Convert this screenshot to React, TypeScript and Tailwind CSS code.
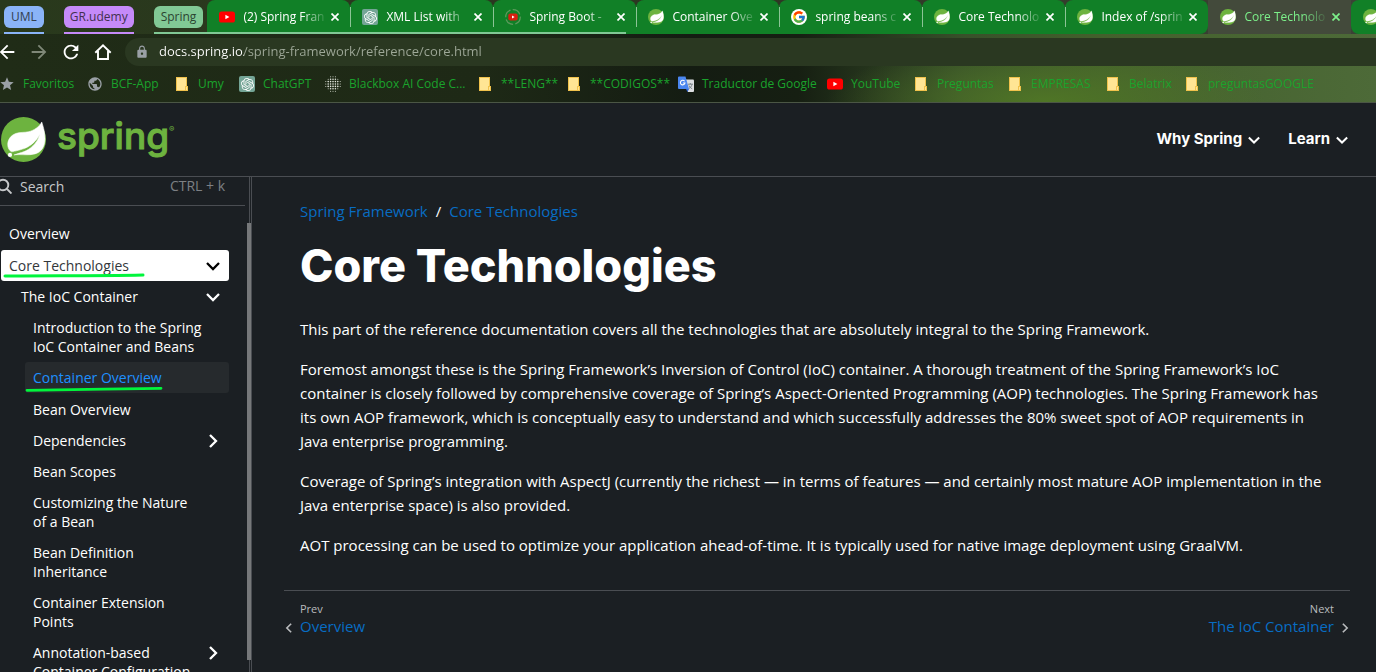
import React from 'react';
import { MdArrowBack, MdArrowForward, MdRefresh, MdLock, MdStar, MdPublic } from 'react-icons/md';
import { SiOpenai } from 'react-icons/si';
import { FcGoogle } from 'react-icons/fc';

const LEAF =
  'M21.7796 17.2939c-2.9385 3.9263-9.2601 2.5928-13.2852 2.7904 0 0-.7161.0494-1.4323.1481 0 0 .2717-.1234.6174-.2469 2.8398-.9877 4.1732-1.1853 5.9018-2.0743 3.2349-1.6545 6.4698-5.2844 7.1118-9.0379-1.2347 3.6053-4.9881 6.7167-8.3959 7.9761-2.3459.8643-6.5685 1.7039-6.5685 1.7039l-.1729-.0988c-2.8645-1.4076-2.9632-7.6304 2.2718-9.6306 2.2966-.889 4.4696-.395 6.9637-.9877 2.6422-.6174 5.7043-2.5929 6.939-5.1857 1.3828 4.1732 3.062 10.643.0493 14.6434z';

function SpringLeaf({ className }: { className: string }) {
  return (
    <svg viewBox="0 0 24 24" className={className} aria-hidden="true">
      <circle cx="12" cy="12" r="12" fill="#6db33f" />
      <path d={LEAF} fill="#fff" stroke="#fff" strokeWidth=".3" />
      <circle cx="4.8" cy="20.2" r="1.1" fill="#fff" />
    </svg>
  );
}

function YouTubeIcon() {
  return (
    <svg viewBox="0 0 16 16" className="size-4" aria-hidden="true">
      <rect x="0" y="2.5" width="16" height="11" rx="2.6" fill="#f00" />
      <path d="M6.4 5.7v4.6L10.4 8z" fill="#fff" />
    </svg>
  );
}

function ChatGptIcon() {
  return (
    <span className="flex size-4 items-center justify-center rounded-[2px] bg-[#74a596] text-white">
      <SiOpenai className="size-[13px]" />
    </span>
  );
}

function RecordingIcon() {
  return (
    <svg viewBox="0 0 16 16" className="size-4" aria-hidden="true">
      <circle cx="8" cy="8" r="7.3" fill="none" stroke="#5d9a5c" strokeWidth="1.2" strokeDasharray="9 2.3" />
      <rect x="3.3" y="4.5" width="9.4" height="7" rx="2" fill="#d91f11" />
      <path d="M7 6.5v3L9.6 8z" fill="#fff" />
    </svg>
  );
}

function GoogleIcon() {
  return (
    <span className="flex size-4 items-center justify-center rounded-full bg-white">
      <FcGoogle className="size-[14px]" />
    </span>
  );
}

function NoteIcon() {
  return (
    <svg viewBox="0 0 16 16" className="size-4" aria-hidden="true">
      <path d="M2 1h11v9h1v5H2z" fill="#f0c24c" />
      <path d="M3 2h9v8h-1v4H3z" fill="#ffe594" />
      <path d="M12 11h1v3h-1z" fill="#ffe594" />
    </svg>
  );
}

function DotsIcon() {
  const dots: React.ReactNode[] = [];
  for (let r = 0; r < 7; r++) {
    for (let c = 0; c < 7; c++) {
      const d = Math.hypot(r - 3, c - 3);
      if (d < 3.4) {
        dots.push(
          <circle key={`${r}-${c}`} cx={0.8 + c * 2.4} cy={0.8 + r * 2.4} r={d < 2.3 ? 0.8 : 0.5} fill="#e4e8df" />,
        );
      }
    }
  }
  return (
    <svg viewBox="0 0 16 16" className="size-4" aria-hidden="true">
      {dots}
    </svg>
  );
}

function TranslateIcon() {
  return (
    <svg viewBox="0 0 16 16" className="size-4" aria-hidden="true">
      <path d="M6 3.500h9a1 1 0 0 1 1 1V15a1 1 0 0 1-1 1H10z" fill="#dcdfe1" />
      <path d="M10 8.200h5M12.300 7v1.200M14 8.300c-.4 2-1.500 3.300-3.200 4.300M11 9.500c.7 1.600 1.800 2.600 3.200 3.300" stroke="#6f7b80" strokeWidth=".9" fill="none" />
      <path d="M8 13h3l-1.500 3z" fill="#3367d6" />
      <path d="M1 .5h6.500L11 13H1a1 1 0 0 1-1-1V1.500a1 1 0 0 1 1-1z" fill="#4a86f0" />
      <path d="M6.600 5.200A2.300 2.300 0 1 0 7 7H4.900" fill="none" stroke="#fff" strokeWidth="1.100" />
    </svg>
  );
}

function HomeIcon() {
  return (
    <svg viewBox="0 0 18 18" className="size-[18px]" fill="none" stroke="#fff" strokeWidth="1.900" aria-hidden="true">
      <path d="M1.300 9.800 9 2.300l7.700 7.500M4 8v8h10V8" />
    </svg>
  );
}

function CloseIcon() {
  return (
    <svg viewBox="0 0 8 8" className="size-2" stroke="currentColor" strokeWidth="1.700" aria-hidden="true">
      <path d="M.5.5l7 7M7.500.5l-7 7" />
    </svg>
  );
}

function Chevron({ className }: { className: string }) {
  return (
    <svg viewBox="0 0 14 14" className={className} fill="none" stroke="currentColor" strokeWidth="2.300" aria-hidden="true">
      <path d="M1 4l6 6 6-6" />
    </svg>
  );
}

type TabData = { title: string; icon: React.ReactNode; divider?: boolean; active?: boolean; shape: string };

function Tab({ title, icon, divider, active, shape }: TabData) {
  const colour = active ? 'bg-[#434a3b] text-[#7cf08a]' : 'bg-[#118027] text-white';
  return (
    <div className={`relative flex h-[34px] w-[143px] shrink-0 items-center pl-3 pr-[11px] ${colour} ${shape}`}>
      {divider && <span className="absolute left-0 top-[7px] h-5 w-px bg-[#8cc496]" />}
      <button type="button" className="flex min-w-0 flex-1 items-center gap-2">
        <span className="shrink-0">{icon}</span>
        <span className="flex-1 whitespace-nowrap text-left text-xs [mask-image:linear-gradient(90deg,#000_72%,rgba(0,0,0,0.15))]">
          {title}
        </span>
      </button>
      <button type="button" aria-label={`Close ${title}`} className="ml-2">
        <CloseIcon />
      </button>
    </div>
  );
}

const leafIcon = <SpringLeaf className="size-4" />;

const groupedTabs: TabData[] = [
  { title: '(2) Spring Fran', icon: <YouTubeIcon />, shape: 'rounded-tl-lg rounded-tr-lg' },
  { title: 'XML List with', icon: <ChatGptIcon />, divider: true, shape: 'rounded-t-lg' },
  { title: 'Spring Boot -', icon: <RecordingIcon />, divider: true, shape: 'rounded-t-lg' },
];

const looseTabs: TabData[] = [
  { title: 'Container Ove', icon: leafIcon, divider: true, shape: 'rounded-t-lg' },
  { title: 'spring beans c', icon: <GoogleIcon />, divider: true, shape: 'rounded-t-lg' },
  { title: 'Core Technolo', icon: leafIcon, divider: true, shape: 'rounded-t-lg' },
  { title: 'Index of /sprin', icon: leafIcon, divider: true, shape: 'rounded-t-lg rounded-br-lg' },
  { title: 'Core Technolo', icon: leafIcon, active: true, shape: '' },
];

const bookmarks = [
  { label: 'Favoritos', width: 'w-[88px]', icon: <MdStar className="size-4 text-[#9aa0a6]" /> },
  { label: 'BCF-App', width: 'w-[87px]', icon: <MdPublic className="size-4 text-[#9aa0a6]" /> },
  { label: 'Umy', width: 'w-[65px]', icon: <NoteIcon /> },
  { label: 'ChatGPT', width: 'w-[86px]', icon: <ChatGptIcon /> },
  { label: 'Blackbox AI Code C...', width: 'w-[152px]', icon: <DotsIcon /> },
  { label: '**LENG**', width: 'w-[89px]', icon: <NoteIcon /> },
  { label: '**CODIGOS**', width: 'w-[112px]', icon: <NoteIcon /> },
  { label: 'Traductor de Google', width: 'w-[149px]', icon: <TranslateIcon /> },
  { label: 'YouTube', width: 'w-[86px]', icon: <YouTubeIcon /> },
  { label: 'Preguntas', width: 'w-[94px]', icon: <NoteIcon /> },
  { label: 'EMPRESAS', width: 'w-[98px]', icon: <NoteIcon /> },
  { label: 'Belatrix', width: 'w-[79px]', icon: <NoteIcon /> },
  { label: 'preguntasGOOGLE', width: 'w-[130px]', icon: <NoteIcon /> },
];

function BrowserChrome() {
  return (
    <div className="shrink-0 overflow-hidden border-b border-[#4b5645] bg-[radial-gradient(ellipse_220px_60px_at_76%_100%,#4f7526,transparent),linear-gradient(90deg,#202c17_0%,#1e2916_35%,#141c12_50%,#161f12_58%,#38502a_70%,#43602c_80%,#4d6a38_100%)] font-['Open_Sans',sans-serif]">
      <div className="flex h-[34px] bg-[linear-gradient(90deg,#29391c,#2c3622_50%,#3c4236)] pl-1">
        <div className="mr-5 flex shrink-0 flex-col justify-between pt-1.5">
          <button type="button" className="h-[22px] rounded-md bg-[#8ab4f8] px-[7px] text-xs text-[#33404f]">UML</button>
          <span className="h-0.5 bg-[#8ab4f8]" />
        </div>
        <div className="mr-5 flex shrink-0 flex-col justify-between pt-1.5">
          <button type="button" className="h-[22px] rounded-md bg-[#c58af9] px-1.5 text-xs text-[#42304f]">GR.udemy</button>
          <span className="h-0.5 bg-[#c58af9]" />
        </div>
        <div className="relative flex shrink-0">
          <button type="button" className="mr-1 mt-1.5 h-[22px] rounded-md bg-[#81c995] px-[7px] text-xs text-[#2b4431]">Spring</button>
          {groupedTabs.map((t) => (
            <Tab key={t.title} {...t} />
          ))}
          <span className="absolute bottom-0 left-0 right-2.5 h-0.5 bg-[#81c995]" />
        </div>
        {looseTabs.map((t, i) => (
          <Tab key={i} {...t} />
        ))}
        <div className="flex flex-1 items-center overflow-hidden rounded-l-lg bg-[#118027] pl-3">
          <span className="shrink-0">{leafIcon}</span>
        </div>
      </div>

      <div className="flex h-9 items-center pt-1 pb-1">
        <div className="flex w-[125px] shrink-0 items-center gap-2.5 text-white">
          <button type="button" aria-label="Back" className="-ml-1"><MdArrowBack className="size-[22px]" /></button>
          <button type="button" aria-label="Forward" className="text-[#7f8878]"><MdArrowForward className="size-[22px]" /></button>
          <button type="button" aria-label="Reload"><MdRefresh className="size-[22px]" /></button>
          <button type="button" aria-label="Home" className="ml-0.5"><HomeIcon /></button>
        </div>
        <div className="flex h-7 flex-1 items-center gap-2.5 rounded-l-full bg-[#2a3821] pl-2.5">
          <MdLock className="size-[14px] text-[#9aa0a6]" />
          <input
            aria-label="Address"
            defaultValue="docs.spring.io/spring-framework/reference/core.html"
            className="w-full flex-1 bg-[linear-gradient(90deg,#fff_85px,#9ea898_85px)] bg-clip-text text-[13px] text-transparent outline-none"
          />
        </div>
      </div>

      <nav aria-label="Bookmarks" className="-ml-px flex h-8 items-center pb-1 text-xs text-[#1aa32c]">
        {bookmarks.map((b) => (
          <a key={b.label} href="#" className={`flex shrink-0 items-center gap-2 whitespace-nowrap ${b.width}`}>
            {b.icon}
            {b.label}
          </a>
        ))}
      </nav>
    </div>
  );
}

function SiteHeader() {
  return (
    <header className="flex h-[74px] shrink-0 items-center justify-between border-b border-[#4a4d52] pl-px pr-7">
      <a href="#" aria-label="Spring home" className="flex items-center gap-[11px]">
        <SpringLeaf className="size-[45px]" />
        <span className="flex items-start pb-2 font-['Inter',sans-serif] text-[#6db33f]">
          <span className="text-[37px] font-medium leading-[44px] [-webkit-text-stroke:1px_#6db33f]">spring</span>
          <span className="pt-2.5 text-[8px] leading-[10px]">®</span>
        </span>
      </a>
      <nav className="flex gap-7 font-['Inter',sans-serif] text-[15px] font-bold text-white">
        <button type="button" className="flex items-center gap-1.5">
          Why Spring <Chevron className="size-3" />
        </button>
        <button type="button" className="flex items-center gap-1.5">
          Learn <Chevron className="size-3" />
        </button>
      </nav>
    </header>
  );
}

const itemBase = 'relative flex w-full items-center justify-between rounded-[3px] px-2 py-1.5 text-left';

function NavItem({ label }: { label: string }) {
  return (
    <li>
      <a href="#" className={itemBase}>
        <span className="max-w-[169px]">{label}</span>
      </a>
    </li>
  );
}

function ExpandableItem({ label }: { label: string }) {
  return (
    <li>
      <button type="button" className={`${itemBase} items-start`}>
        <span className="max-w-[160px]">{label}</span>
        <Chevron className="mr-px mt-[3px] size-[14px] shrink-0 -rotate-90" />
      </button>
    </li>
  );
}

function Sidebar() {
  return (
    <aside className="relative w-[252px] shrink-0 overflow-hidden border-r border-[#4a4d52] text-sm leading-[19px]">
      <button type="button" className="flex h-[29px] w-[245px] items-center border-b border-[#4a4d52] pb-2.5 pr-5 text-[#c6c8ca]">
        <svg viewBox="0 0 16 16" className="-ml-1 size-4 shrink-0" fill="none" stroke="currentColor" strokeWidth="1.900" aria-hidden="true">
          <circle cx="7" cy="7" r="5.300" />
          <path d="M11 11l4.500 4.500" />
        </svg>
        <span className="ml-2 flex-1 text-left">Search</span>
        <span className="text-sm text-[#7d8084]">CTRL + k</span>
      </button>
      <nav aria-label="Documentation" className="w-[229px] pl-px pt-3 text-white">
        <ul>
          <li><a href="#" className={itemBase}>Overview</a></li>
          <li>
            <button type="button" className={`${itemBase} mt-px bg-white text-[#33373b]`}>
              Core Technologies
              <Chevron className="mr-px size-[14px] text-black" />
              <svg viewBox="0 0 142 6" className="absolute bottom-[3px] left-0.5 h-1.5 w-[142px]" aria-hidden="true">
                <path d="M2 4C50 3.500 90 4 140 3" stroke="#00f53c" strokeWidth="3" strokeLinecap="round" fill="none" />
              </svg>
            </button>
            <ul className="pl-3">
              <li>
                <button type="button" className={itemBase}>
                  The IoC Container
                  <Chevron className="mr-px size-[14px]" />
                </button>
                <ul className="pl-3">
                  <NavItem label="Introduction to the Spring IoC Container and Beans" />
                  <li className="pb-px">
                    <a href="#" className={`${itemBase} bg-[#262a2d] text-[#1e90ff]`}>
                      Container Overview
                      <svg viewBox="0 0 138 6" className="absolute bottom-px left-0 h-1.5 w-[138px]" aria-hidden="true">
                        <path d="M2 4.300C50 4 90 2.800 136 2.300" stroke="#00f53c" strokeWidth="2.800" strokeLinecap="round" fill="none" />
                      </svg>
                    </a>
                  </li>
                  <NavItem label="Bean Overview" />
                  <ExpandableItem label="Dependencies" />
                  <NavItem label="Bean Scopes" />
                  <NavItem label="Customizing the Nature of a Bean" />
                  <NavItem label="Bean Definition Inheritance" />
                  <NavItem label="Container Extension Points" />
                  <ExpandableItem label="Annotation-based Container Configuration" />
                </ul>
              </li>
            </ul>
          </li>
        </ul>
      </nav>
      <span className="absolute inset-y-0 right-px w-px bg-[#4a4d52]" />
      <span className="absolute bottom-3 right-0 top-[46px] w-1 bg-[#76787a]" />
    </aside>
  );
}

function Article() {
  return (
    <main className="min-w-0 flex-1 pl-8 pr-[26px] pt-[22px]">
      <article className="px-4 pb-[33px] text-[15px] leading-6 text-white">
        <nav aria-label="Breadcrumb" className="flex gap-2 text-[#086dc3]">
          <a href="#">Spring Framework</a>
          <span className="text-white">/</span>
          <a href="#">Core Technologies</a>
        </nav>
        <h1 className="mb-6 mt-4 font-['Inter',sans-serif] text-[45px] font-extrabold leading-[54px]">Core Technologies</h1>
        <div className="space-y-4">
          <p>This part of the reference documentation covers all the technologies that are absolutely integral to the Spring Framework.</p>
          <p>
            Foremost amongst these is the Spring Framework’s Inversion of Control (IoC) container. A thorough treatment of the Spring
            Framework’s IoC container is closely followed by comprehensive coverage of Spring’s Aspect-Oriented Programming (AOP)
            technologies. The Spring Framework has its own AOP framework, which is conceptually easy to understand and which
            successfully addresses the 80% sweet spot of AOP requirements in Java enterprise programming.
          </p>
          <p>
            Coverage of Spring’s integration with AspectJ (currently the richest — in terms of features — and certainly most mature AOP
            implementation in the Java enterprise space) is also provided.
          </p>
          <p>AOT processing can be used to optimize your application ahead-of-time. It is typically used for native image deployment using GraalVM.</p>
        </div>
      </article>
      <nav aria-label="Pagination" className="flex justify-between border-t border-[#4a4d52] pt-2.5 text-[15px] leading-[18px]">
        <a href="#" className="flex items-end text-[#086dc3]">
          <Chevron className="mb-0.5 mr-1.5 size-2.5 rotate-90 text-[#b9bbbd]" />
          <span>
            <span className="block text-[11px] leading-4 text-[#b9bbbd]">Prev</span>
            Overview
          </span>
        </a>
        <a href="#" className="flex items-end text-right text-[#086dc3]">
          <span>
            <span className="block text-[11px] leading-4 text-[#b9bbbd]">Next</span>
            The IoC Container
          </span>
          <Chevron className="mb-0.5 ml-1.5 size-2.5 -rotate-90 text-[#b9bbbd]" />
        </a>
      </nav>
    </main>
  );
}

export default function App() {
  return (
    <div className="flex h-screen flex-col overflow-hidden bg-[#1b1f23] font-['Open_Sans',sans-serif]">
      <BrowserChrome />
      <SiteHeader />
      <div className="flex min-h-0 flex-1">
        <Sidebar />
        <Article />
      </div>
    </div>
  );
}
